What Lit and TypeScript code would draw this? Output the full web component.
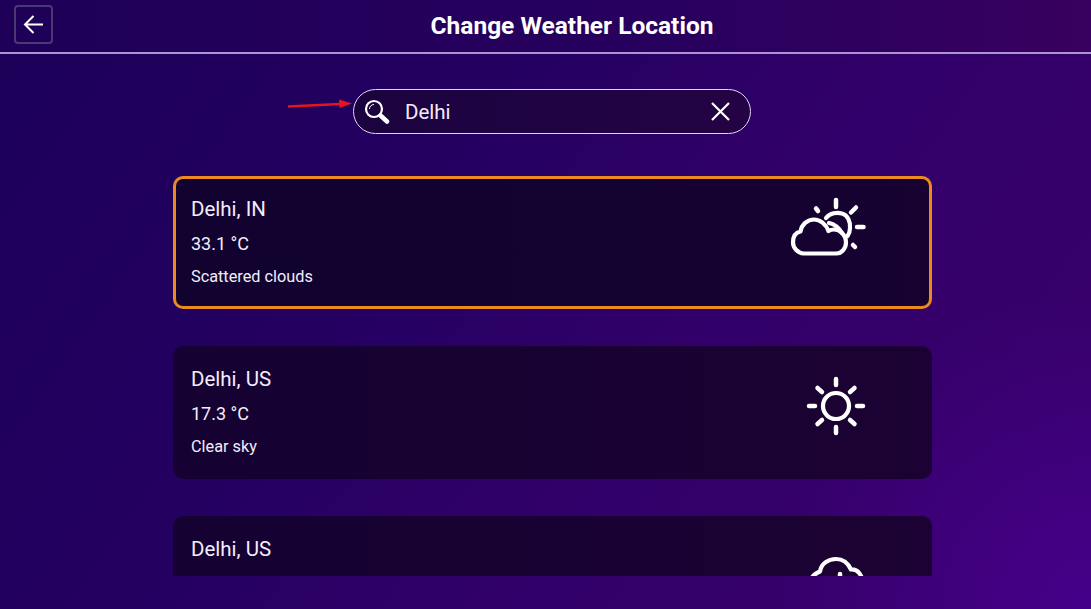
import { LitElement, html, css } from "lit";
import { customElement } from "lit/decorators.js";

const sun = html`<svg class="icon sun" viewBox="0 0 60 60">
  <line x1="30" y1="3" x2="30" y2="9"/><line x1="30" y1="51" x2="30" y2="57"/>
  <line x1="3" y1="30" x2="9" y2="30"/><line x1="51" y1="30" x2="57" y2="30"/>
  <line x1="11.500" y1="12" x2="16" y2="16"/><line x1="44" y1="44" x2="48.500" y2="48"/>
  <line x1="11.500" y1="48" x2="16" y2="44"/><line x1="44" y1="16" x2="48.500" y2="12"/>
  <circle class="thin" cx="30" cy="30" r="13"/>
</svg>`;

const partly = html`<svg class="icon partly" viewBox="0 0 76 60">
  <line x1="46" y1="3" x2="46" y2="10"/>
  <line x1="26" y1="11.500" x2="28" y2="14"/>
  <line x1="66" y1="10.500" x2="61" y2="15.500"/>
  <line x1="67" y1="30" x2="73.500" y2="30"/>
  <line x1="63" y1="48" x2="65" y2="50"/>
  <path class="thin" d="M36 21 C40 16 47 15 52 16.500 C58 18 60.500 25 60 31 C60 34 59 37 57.500 39"/>
  <path class="thin" d="M39 26 C44 27 49 31 52 36"/>
  <path class="thin" d="M14 56.500 H46 C52 56.500 56 51 56 45.500 C56 38 50 32.500 44 32.500 C41.500 32.500 40 33 38.500 34 C36 27 30 22.500 24 22.500 C17.500 22.500 11.500 27.500 10.500 34.500 C5.500 35.500 3 40 3 45.500 C3 51 8 56.500 14 56.500 Z"/>
</svg>`;

const cloudRain = html`<svg class="icon cloud" viewBox="0 0 60 60">
  <path class="thin" d="M5 34 C3 26 5 19 14 15.500 C15 8 22 3 30 3 C37 3 42 7 45 13.500 C51 13 57 17 58 34"/>
  <line x1="34" y1="18" x2="34" y2="30"/>
</svg>`;

@customElement("app-root")
export class AppRoot extends LitElement {
  static styles = css`
    :host {
      display: block;
      width: 1091px;
      height: 609px;
      position: relative;
      overflow: hidden;
      font-family: Roboto, sans-serif;
      color: #f3ecfa;
      background:
        radial-gradient(circle at 100% 100%, #45008a 0, rgba(67, 0, 127, 0) 320px),
        linear-gradient(125deg, #1c0058 0%, #250062 38%, #32006a 62%, #37006a 85%, #3a006c 100%);
    }
    .header {
      height: 52px;
      display: flex;
      align-items: center;
      padding-left: 14px;
      border-bottom: 2px solid #ae92d6;
      background: linear-gradient(90deg, #1e0058 0%, #28005e 60%, #380060 100%);
    }
    .back {
      width: 39px;
      height: 39px;
      margin-top: -3px;
      box-sizing: border-box;
      border: 2px solid #4a3a72;
      border-radius: 4px;
      display: flex;
      align-items: center;
      justify-content: center;
    }
    .back svg { width: 21px; height: 21px; fill: none; stroke: #fff; stroke-width: 2; }
    .title {
      flex: 1;
      text-align: center;
      font-size: 24.500px;
      font-weight: 700;
      color: #fff;
      margin-top: -1px;
    }
    .search-row {
      display: flex;
      justify-content: center;
      padding: 35px 0 42px 13px;
    }
    .search {
      width: 398px;
      height: 45px;
      box-sizing: border-box;
      border: 1.500px solid #e2d4f2;
      border-radius: 23px;
      background: linear-gradient(90deg, #1b0340, #240345);
      display: flex;
      align-items: center;
      padding: 0 19px 0 9px;
    }
    .search .mag { width: 27px; height: 27px; fill: none; stroke: #fff; }
    .search .q { flex: 1; font-size: 20.500px; margin-left: 15px; color: #f3ecfa; }
    .search .x { width: 21px; height: 21px; stroke: #fff; stroke-width: 2.2; fill: none; }
    .arrow { position: absolute; left: 286px; top: 97px; width: 68px; height: 14px; }
    .list {
      height: 400px;
      overflow: hidden;
      padding-left: 173px;
      width: 759px;
      display: flex;
      flex-direction: column;
      gap: 37px;
    }
    .card {
      flex: none;
      width: 759px;
      height: 133px;
      box-sizing: border-box;
      border-radius: 10px;
      background: linear-gradient(90deg, #150232, #1c0234);
      padding: 19px 18px 0;
      display: flex;
      justify-content: space-between;
    }
    .card.sel {
      border: 3px solid #ec8a1e;
      padding: 16px 15px 0;
      background: linear-gradient(90deg, #110230, #170230);
    }
    .name { font-size: 20.500px; line-height: 26px; margin-top: 1px; }
    .temp { font-size: 18px; line-height: 24px; margin-top: 10px; }
    .desc { font-size: 16.300px; line-height: 22px; margin-top: 10px; }
    .iconwrap { width: 124px; display: flex; justify-content: flex-start; align-items: flex-start; }
    .icon { fill: none; stroke: #fff; stroke-width: 4.500; stroke-linecap: round; stroke-linejoin: round; }
    .icon .thin { stroke-width: 4.200; }
    .sun { width: 60px; height: 60px; margin: 11px 0 0 16px; }
    .partly { width: 76px; height: 60px; margin: 2px 0 0 0; }
    .cloud { width: 60px; height: 60px; margin: 21px 0 0 16px; }
  `;

  private card(name: string, temp: string, desc: string, icon: unknown, sel = false) {
    return html`<div class="card ${sel ? "sel" : ""}">
      <div>
        <div class="name">${name}</div>
        <div class="temp">${temp}</div>
        <div class="desc">${desc}</div>
      </div>
      <div class="iconwrap">${icon}</div>
    </div>`;
  }

  render() {
    return html`
      <div class="header">
        <div class="back">
          <svg viewBox="0 0 21 21"><path d="M20 10.500H2M10.500 2L2 10.500L10.500 19"/></svg>
        </div>
        <div class="title">Change Weather Location</div>
      </div>
      <div class="search-row">
        <div class="search">
          <svg class="mag" viewBox="0 0 27 27">
            <circle cx="11" cy="11" r="8" stroke-width="2.200"/>
            <path d="M6.500 11a4.500 4.500 0 0 1 4.500-4.500" stroke-width="1"/>
            <line x1="17.500" y1="17.500" x2="24" y2="23.500" stroke-width="4.500" stroke-linecap="round"/>
          </svg>
          <span class="q">Delhi</span>
          <svg class="x" viewBox="0 0 21 21"><path d="M2 2L19 19M19 2L2 19"/></svg>
        </div>
      </div>
      <div class="list">
        ${this.card("Delhi, IN", "33.1 °C", "Scattered clouds", partly, true)}
        ${this.card("Delhi, US", "17.3 °C", "Clear sky", sun)}
        ${this.card("Delhi, US", "", "", cloudRain)}
      </div>
      <svg class="arrow" viewBox="0 0 68 14">
        <line x1="2" y1="9.500" x2="54" y2="7" stroke="#e5141e" stroke-width="2.500"/>
        <path d="M66 6.500L53 2.500L53.500 11Z" fill="#e5141e"/>
      </svg>
    `;
  }
}
